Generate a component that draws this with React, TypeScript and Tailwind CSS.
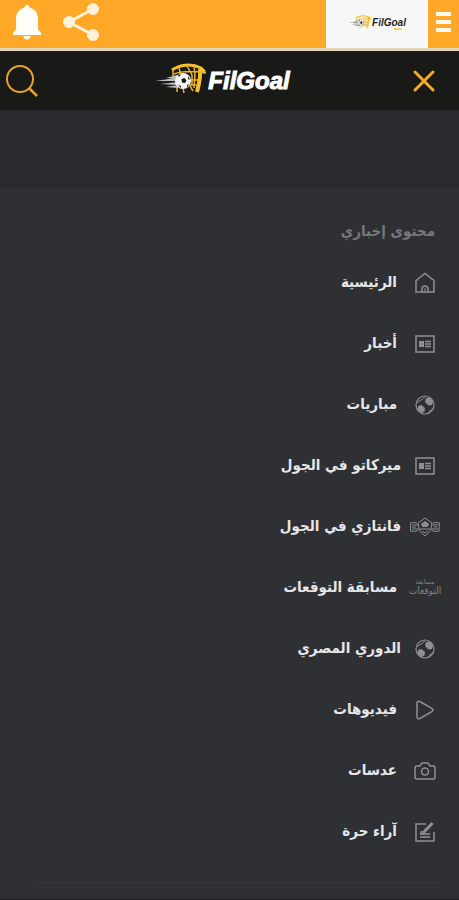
import type { ReactNode } from "react";

type IconName = "home" | "news" | "ball" | "fantasy" | "predict" | "play" | "camera" | "edit";

const MENU: { label: string; icon: IconName; wide?: boolean }[] = [
  { label: "الرئيسية", icon: "home" },
  { label: "أخبار", icon: "news" },
  { label: "مباريات", icon: "ball" },
  { label: "ميركاتو في الجول", icon: "news", wide: true },
  { label: "فانتازي في الجول", icon: "fantasy", wide: true },
  { label: "مسابقة التوقعات", icon: "predict" },
  { label: "الدوري المصري", icon: "ball", wide: true },
  { label: "فيديوهات", icon: "play" },
  { label: "عدسات", icon: "camera" },
  { label: "آراء حرة", icon: "edit" },
];

const SHAPES: Record<Exclude<IconName, "fantasy" | "predict">, ReactNode> = {
  home: (
    <>
      <path d="M2 8.5 11 1.5l9 7V20H2Z" />
      <path d="M8 20v-3a3 3 0 0 1 6 0V20M11 16.500v2" />
    </>
  ),
  news: (
    <>
      <path d="M2 3h18v16H2Z" />
      <path d="M5 8h5v6H5Z" fill="currentColor" stroke="none" />
      <path d="M11 8.500h6M11 11h6M11 13.500h6" />
    </>
  ),
  ball: (
    <>
      <circle cx="11" cy="11" r="9" strokeWidth="1.200" />
      <path d="m12 4 4-.5 3 4-1 3.500-3.500.5L11 8ZM4 12l3.500-1 3.500 3-.5 3.500-3 1.500L4 16Z" fill="currentColor" stroke="none" />
      <path d="M3 8.500 7 6l4-3M14 20l2-3.500 4-2" strokeWidth="1" />
    </>
  ),
  play: <path d="M3 4.200v13.600c0 1.800 1.200 2.500 2.800 1.700l12-6.800c1.500-.9 1.500-2.500 0-3.400l-12-6.800C4.200 1.700 3 2.400 3 4.200Z" />,
  camera: (
    <>
      <path d="M3 6h3l2-3h6l2 3h3q2 0 2 2v9q0 2-2 2H3q-2 0-2-2V8q0-2 2-2Z" />
      <circle cx="11" cy="11.500" r="3.500" />
    </>
  ),
  edit: (
    <>
      <path d="M12 3H2v17h18v-9" />
      <path d="m9 12 9.500-10" strokeWidth="3" />
      <path d="M6 13h10M6 16h10" />
      <path d="m7.500 10-.5 3 3-.5" />
    </>
  ),
};

function MenuIcon({ name }: { name: IconName }) {
  if (name === "predict") {
    return (
      <span aria-hidden="true" className="flex flex-col items-center font-normal text-[#808184]">
        <span className="text-[7px] leading-[6px]">مسابقة</span>
        <span className="text-[10px] leading-[11px]">التوقعات</span>
      </span>
    );
  }
  if (name === "fantasy") {
    return (
      <svg viewBox="0 0 32 20" className="h-5 w-8 text-[#8d8e91]" fill="none" stroke="currentColor" aria-hidden="true">
        <path d="M8 6 5 5.500 1.500 6v8l4 .5 3-1M24 6l3-.5 3.500.5-.5 8-4 .5-3-1" />
        <path d="m9 6 7-5 7 5-1.500 8L16 19l-5.500-5Z" />
        <path d="M3 8h7M3 10h4M3 12h7M22 8h7M25 10h3M22 12h7M11 12h10" />
        <path d="m16 4 4 3-1.500 3h-5L12 7Z" fill="currentColor" stroke="none" />
        <path d="m13 14 3 2 3-2" />
      </svg>
    );
  }
  return (
    <svg viewBox="0 0 22 22" className="size-[22px] text-[#8f9093]" fill="none" stroke="currentColor" strokeWidth="1.5" aria-hidden="true">
      {SHAPES[name]}
    </svg>
  );
}

// Goal net with the ball flying into it
function GoalMark({ className, ball, lines }: { className: string; ball: string; lines: string }) {
  return (
    <svg viewBox="0 0 54 32" className={className} fill="none" aria-hidden="true">
      <path d="M18 7C25 2 37 0 47 5l3 3-1 2" stroke="#f6bf2b" strokeWidth="3" />
      <path d="M46 6c1 8-1 15-3 23" stroke="#f6bf2b" strokeWidth="4" />
      <path d="M19 6v8M25 5l2 8M33 3l5 9 0 10M40 3l1 8-1 14M20 11c8-3 20-3 32-1M36 17h9M36 22h8M23 23v6M29 25l1 5M36 23l3 5" stroke="#e9b429" strokeWidth="1.500" />
      <path d="m1 18 21-3v3ZM6 21l18-2v3ZM12 15l11-3v4ZM12 24l12-2v3Z" fill={lines} />
      <circle cx="29" cy="18" r="8" fill={ball} />
      <path d="m27.500 16 3-1 2 2.500-1.500 2.500-3-.5ZM24 12l3-1-2 3ZM34 13l2 4-2-1ZM24 22l3 1v2ZM33 22l2-1-2 4Z" fill="#191917" />
    </svg>
  );
}

function AppHeader() {
  return (
    <header className="flex h-[51px] items-stretch border-b-3 border-[#e3d5bd] bg-[#ffa726]">
      <button type="button" aria-label="Notifications" className="ml-3 flex w-[30px] items-center justify-center pb-1">
        <svg viewBox="0 0 30 36" className="h-9 w-[30px]" fill="#fffdf8">
          <path d="M15 1c1.500 0 2.500 1 2.500 2.500C23 5 26 9 26 15v10l3 4v2H1v-2l3-4V15C4 9 7 5 12.500 3.500 12.500 2 13.500 1 15 1ZM11.500 32h7c0 2-1.500 3.500-3.500 3.500S11.500 34 11.500 32Z" />
        </svg>
      </button>
      <button type="button" aria-label="Share" className="ml-5 flex w-[38px] items-center justify-center pb-1">
        <svg viewBox="0 0 38 40" className="h-10 w-[38px]" fill="#fff2d9" stroke="#fff2d9">
          <path d="M31 7 7 20l24 13" fill="none" strokeWidth="3" />
          <circle cx="31" cy="7" r="5.500" />
          <circle cx="7" cy="20" r="5.500" />
          <circle cx="31" cy="33" r="5.500" />
        </svg>
      </button>
      <div className="ml-auto flex w-[102px] items-center justify-center bg-[#f7f7f7] pb-1">
        <GoalMark className="h-4 w-6" ball="#d8d8d8" lines="#9a9a9a" />
        <div className="flex flex-col pt-1">
          <span className="font-['Liberation_Sans',sans-serif] text-[10px] leading-[10px] font-bold text-[#26231c] italic">FilGoal</span>
          <span className="mr-1 h-[2px] w-2 self-end bg-[#f3d268]" />
        </div>
      </div>
      <button type="button" aria-label="Menu" className="flex w-[31px] flex-col items-center justify-center gap-1 pb-1">
        <span className="h-1 w-[15px] bg-[#fff8ec]" />
        <span className="h-1 w-[15px] bg-[#fff8ec]" />
        <span className="h-1 w-[15px] bg-[#fff8ec]" />
      </button>
    </header>
  );
}

function SiteBar() {
  return (
    <div className="flex h-[59px] items-center justify-between bg-[#191917] pr-6 pl-[5px]">
      <button type="button" aria-label="Search">
        <svg viewBox="0 0 34 34" className="size-[34px]" fill="none" stroke="#e5a32c" strokeWidth="2">
          <circle cx="15" cy="15" r="13" />
          <path d="m24 24 8 8" strokeWidth="2.500" />
        </svg>
      </button>
      <a href="#" aria-label="FilGoal" className="mr-2 flex items-center pb-1">
        <GoalMark className="h-8 w-[54px]" ball="#f4f4f4" lines="#bdbdbd" />
        <span className="pt-1 font-['Liberation_Sans',sans-serif] text-[24px] leading-7 font-bold text-white italic [-webkit-text-stroke:1px_white]">
          FilGoal
        </span>
      </a>
      <button type="button" aria-label="Close">
        <svg viewBox="0 0 22 22" className="size-[22px]" fill="none" stroke="#f6ab27" strokeWidth="3" strokeLinecap="round">
          <path d="m2 2 18 18M20 2 2 20" />
        </svg>
      </button>
    </div>
  );
}

export default function App() {
  return (
    <div className="min-h-screen bg-[#2f3034] font-['DejaVu_Sans_Condensed','DejaVu_Sans',sans-serif]">
      <AppHeader />
      <SiteBar />
      <div className="h-[78px] bg-[#2a2b2f]" />
      <nav dir="rtl" className="border-b-2 border-[#211d24] pt-[22px]">
        <h2 className="h-[42px] pr-6 text-[15px] leading-[42px] font-bold text-[#77787b]">محتوى إخباري</h2>
        <ul>
          {MENU.map((item) => (
            <li key={item.label}>
              <a
                href="#"
                className={`flex h-[61px] items-center pr-[18px] text-[15px] font-bold text-[#e6e6e8] ${item.wide ? "gap-2" : "gap-3"}`}
              >
                <span className="flex w-8 shrink-0 justify-center">
                  <MenuIcon name={item.icon} />
                </span>
                {item.label}
              </a>
            </li>
          ))}
        </ul>
        <hr className="mt-5 mr-5 mb-4 ml-9 border-[#37383c]" />
      </nav>
    </div>
  );
}
